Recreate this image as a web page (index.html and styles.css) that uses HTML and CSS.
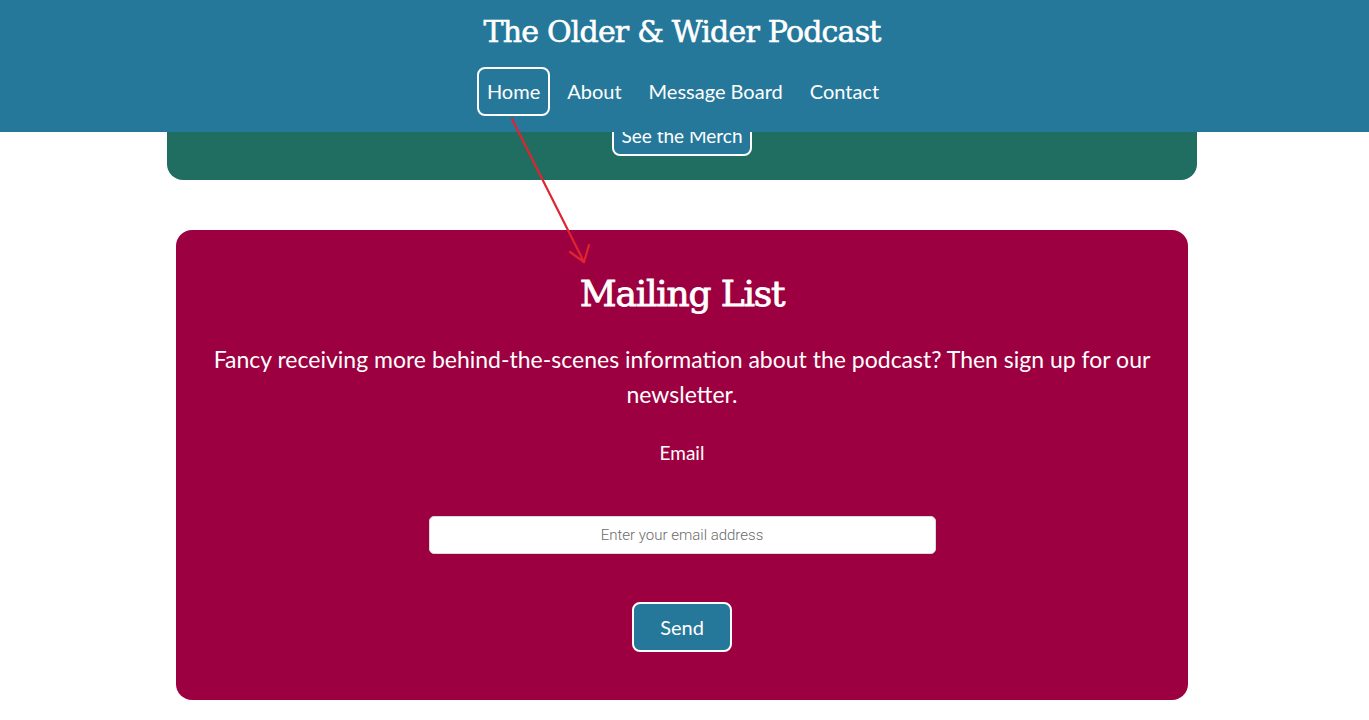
FILE: index.html
```html
<!DOCTYPE html>
<html lang="en">
<head>
<meta charset="utf-8">
<title>The Older &amp; Wider Podcast</title>
<link rel="stylesheet" href="styles.css">
</head>
<body>
<header class="site-header">
  <h1 class="site-title">The Older &amp; Wider Podcast</h1>
  <nav class="nav">
    <a class="nav-link active" href="#">Home</a>
    <a class="nav-link" href="#">About</a>
    <a class="nav-link" href="#">Message Board</a>
    <a class="nav-link" href="#">Contact</a>
  </nav>
</header>

<main class="page">
  <section class="card card-merch">
    <a class="btn btn-merch" href="#">See the Merch</a>
  </section>

  <section class="card card-mail">
    <h2 class="mail-title">Mailing List</h2>
    <p class="mail-text">Fancy receiving more behind-the-scenes information about the podcast? Then sign up for our newsletter.</p>
    <form class="mail-form">
      <label class="mail-label" for="email">Email</label>
      <input class="mail-input" id="email" type="email" placeholder="Enter your email address">
      <button class="btn btn-send" type="button">Send</button>
    </form>
  </section>
</main>

<svg class="annotation" width="120" height="160" viewBox="0 0 120 160">
  <path d="M12 9 L84 152" stroke="#e0242f" stroke-width="2.2" fill="none" stroke-linecap="round"/>
  <path d="M70 142 L84 152 L89 135" stroke="#e0242f" stroke-width="2.2" fill="none" stroke-linecap="round" stroke-linejoin="round"/>
</svg>
</body>
</html>
```

FILE: styles.css
```css
* { box-sizing: border-box; }

html, body {
  margin: 0;
  padding: 0;
  background: #ffffff;
}

body {
  font-family: Lato, "Noto Sans", "Liberation Sans", sans-serif;
  color: #ffffff;
  width: 1364px;
}

.site-header {
  position: fixed;
  top: 0;
  left: 0;
  width: 1369px;
  height: 132px;
  background: #26789b;
  z-index: 10;
  display: flex;
  flex-direction: column;
  align-items: center;
  padding-right: 5px;
}

.site-title {
  margin: 12px 0 0;
  font-family: "DejaVu Serif", "Liberation Serif", serif;
  font-weight: normal;
  font-size: 30px;
  line-height: 40px;
  letter-spacing: -0.8px;
  -webkit-text-stroke: 0.6px #ffffff;
  color: #ffffff;
}

.nav {
  display: flex;
  gap: 7px;
  margin-top: 15px;
  padding-left: 2px;
}

.nav-link {
  display: block;
  color: #ffffff;
  text-decoration: none;
  font-size: 20px;
  line-height: 45px;
  padding: 0 8px;
  border: 2px solid transparent;
  border-radius: 8px;
}

.nav-link.active {
  border-color: #ffffff;
}

.page {
  display: flex;
  flex-direction: column;
  align-items: center;
  padding-bottom: 40px;
}

.card {
  border-radius: 16px;
}

.card-merch {
  width: 1030px;
  height: 180px;
  background: #206d62;
  border-radius: 0 0 16px 16px;
  display: flex;
  justify-content: center;
  align-items: flex-end;
  padding-bottom: 24px;
}

.btn {
  display: inline-block;
  color: #ffffff;
  background: #26789b;
  border: 2px solid #ffffff;
  border-radius: 8px;
  font-family: Lato, "Noto Sans", sans-serif;
  font-size: 20px;
  text-decoration: none;
  cursor: pointer;
}

.btn-merch {
  width: 140px;
  height: 40px;
  line-height: 35px;
  text-align: center;
  font-size: 19px;
}

.card-mail {
  width: 1012px;
  margin-top: 50px;
  background: #9d0040;
  padding: 34px 30px 48px;
  display: flex;
  flex-direction: column;
  align-items: center;
  text-align: center;
}

.mail-title {
  margin: 0;
  font-family: "DejaVu Serif", "Liberation Serif", serif;
  font-weight: normal;
  font-size: 36px;
  line-height: 60px;
  letter-spacing: -1.2px;
  -webkit-text-stroke: 0.8px #ffffff;
}

.mail-text {
  margin: 18px 0 0;
  font-size: 23px;
  line-height: 35px;
}

.mail-form {
  display: flex;
  flex-direction: column;
  align-items: center;
}

.mail-label {
  margin-top: 26px;
  font-size: 19px;
  line-height: 30px;
}

.mail-input {
  margin-top: 48px;
  width: 507px;
  height: 38px;
  border: 1px solid #d9d9d9;
  border-radius: 5px;
  background: #ffffff;
  text-align: center;
  font-family: Roboto, "Noto Sans", sans-serif;
  font-weight: 300;
  font-size: 15px;
  color: #333333;
}

.mail-input::placeholder {
  color: #6b6b6b;
}

.btn-send {
  margin-top: 48px;
  width: 100px;
  height: 50px;
  padding: 0;
}

.annotation {
  position: absolute;
  left: 500px;
  top: 110px;
  z-index: 20;
  pointer-events: none;
}
```
